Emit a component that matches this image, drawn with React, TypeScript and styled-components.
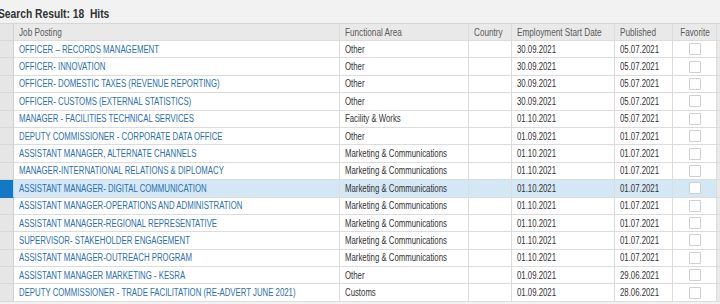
import React from "react";
import styled, { createGlobalStyle } from "styled-components";

const Global = createGlobalStyle`
  html, body { margin: 0; padding: 0; background: #f2f2f2; }
  body { font-family: "Liberation Sans", Arial, sans-serif; overflow: hidden; }
`;

const cols = "14px 326px 129px 43px 103px 58px 44px 3px";

const Page = styled.div`
  width: 720px;
  height: 304px;
  overflow: hidden;
  background: #f2f2f2;
`;

const Title = styled.div`
  height: 23px;
  box-sizing: border-box;
  padding: 6px 0 0 0;
  margin-left: -2px;
  font-size: 13px;
  font-weight: bold;
  color: #333;
  white-space: pre;
  line-height: 16px;
  transform: scaleX(0.79);
  transform-origin: left center;
`;

const Row = styled.div<{ $head?: boolean; $selected?: boolean }>`
  display: grid;
  grid-template-columns: ${cols};
  height: ${(p) => (p.$head ? "18px" : "17.4px")};
  background: ${(p) => (p.$head ? "#e9e9e9" : p.$selected ? "#d3e7f4" : "#fff")};
  border-top: ${(p) => (p.$head ? "1px solid #d6d6d6" : "none")};
  box-sizing: border-box;
`;

const Cell = styled.div<{ $head?: boolean; $align?: string; $link?: boolean }>`
  box-sizing: border-box;
  border-right: 1px solid #dcdcdc;
  border-bottom: 1px solid #dcdcdc;
  padding: 0 5px;
  display: flex;
  align-items: center;
  justify-content: ${(p) => p.$align || "flex-start"};
  font-size: ${(p) => (p.$head ? "10.5px" : "10px")};
  color: ${(p) => (p.$head ? "#5a5a5a" : p.$link ? "#2b6fb0" : "#333")};
  white-space: nowrap;
  overflow: hidden;
`;

const Label = styled.span<{ $center?: boolean }>`
  display: inline-block;
  white-space: nowrap;
  transform: scaleX(0.78);
  transform-origin: ${(p) => (p.$center ? "center" : "left")} center;
`;

const Selector = styled.div<{ $selected?: boolean; $head?: boolean }>`
  background: ${(p) => (p.$selected ? "#1479c5" : "#e6e6e6")};
  border-bottom: 1px solid ${(p) => (p.$selected ? "#1479c5" : "#d8d8d8")};
  border-right: 1px solid #d0d0d0;
  box-sizing: border-box;
`;

const Edge = styled.div`
  background: #e9e9e9;
  border-bottom: 1px solid #dcdcdc;
  box-sizing: border-box;
`;

const Check = styled.span`
  display: inline-block;
  width: 10px;
  height: 10px;
  border: 1px solid #cfcfcf;
  background: #fff;
  border-radius: 1px;
`;

type Job = [string, string, string, string];

const jobs: Job[] = [
  ["OFFICER – RECORDS MANAGEMENT", "Other", "30.09.2021", "05.07.2021"],
  ["OFFICER- INNOVATION", "Other", "30.09.2021", "05.07.2021"],
  ["OFFICER- DOMESTIC TAXES (REVENUE REPORTING)", "Other", "30.09.2021", "05.07.2021"],
  ["OFFICER- CUSTOMS (EXTERNAL STATISTICS)", "Other", "30.09.2021", "05.07.2021"],
  ["MANAGER - FACILITIES TECHNICAL SERVICES", "Facility & Works", "01.10.2021", "05.07.2021"],
  ["DEPUTY COMMISSIONER - CORPORATE DATA OFFICE", "Other", "01.09.2021", "01.07.2021"],
  ["ASSISTANT MANAGER, ALTERNATE CHANNELS", "Marketing & Communications", "01.10.2021", "01.07.2021"],
  ["MANAGER-INTERNATIONAL RELATIONS & DIPLOMACY", "Marketing & Communications", "01.10.2021", "01.07.2021"],
  ["ASSISTANT MANAGER- DIGITAL COMMUNICATION", "Marketing & Communications", "01.10.2021", "01.07.2021"],
  ["ASSISTANT MANAGER-OPERATIONS AND ADMINISTRATION", "Marketing & Communications", "01.10.2021", "01.07.2021"],
  ["ASSISTANT MANAGER-REGIONAL REPRESENTATIVE", "Marketing & Communications", "01.10.2021", "01.07.2021"],
  ["SUPERVISOR- STAKEHOLDER ENGAGEMENT", "Marketing & Communications", "01.10.2021", "01.07.2021"],
  ["ASSISTANT MANAGER-OUTREACH PROGRAM", "Marketing & Communications", "01.10.2021", "01.07.2021"],
  ["ASSISTANT MANAGER MARKETING - KESRA", "Other", "01.09.2021", "29.06.2021"],
  ["DEPUTY COMMISSIONER - TRADE FACILITATION (RE-ADVERT JUNE 2021)", "Customs", "01.09.2021", "28.06.2021"],
];

export default function App() {
  return (
    <Page>
      <Global />
      <Title>{"Search Result: 18  Hits"}</Title>
      <Row $head>
        <Selector $head />
        <Cell $head><Label>Job Posting</Label></Cell>
        <Cell $head><Label>Functional Area</Label></Cell>
        <Cell $head><Label>Country</Label></Cell>
        <Cell $head><Label>Employment Start Date</Label></Cell>
        <Cell $head><Label>Published</Label></Cell>
        <Cell $head $align="center"><Label $center>Favorite</Label></Cell>
        <Edge />
      </Row>
      {jobs.map((j, i) => (
        <Row key={i} $selected={i === 8}>
          <Selector $selected={i === 8} />
          <Cell $link><Label>{j[0]}</Label></Cell>
          <Cell><Label>{j[1]}</Label></Cell>
          <Cell />
          <Cell><Label>{j[2]}</Label></Cell>
          <Cell><Label>{j[3]}</Label></Cell>
          <Cell $align="center">
            <Check />
          </Cell>
          <Edge />
        </Row>
      ))}
    </Page>
  );
}
